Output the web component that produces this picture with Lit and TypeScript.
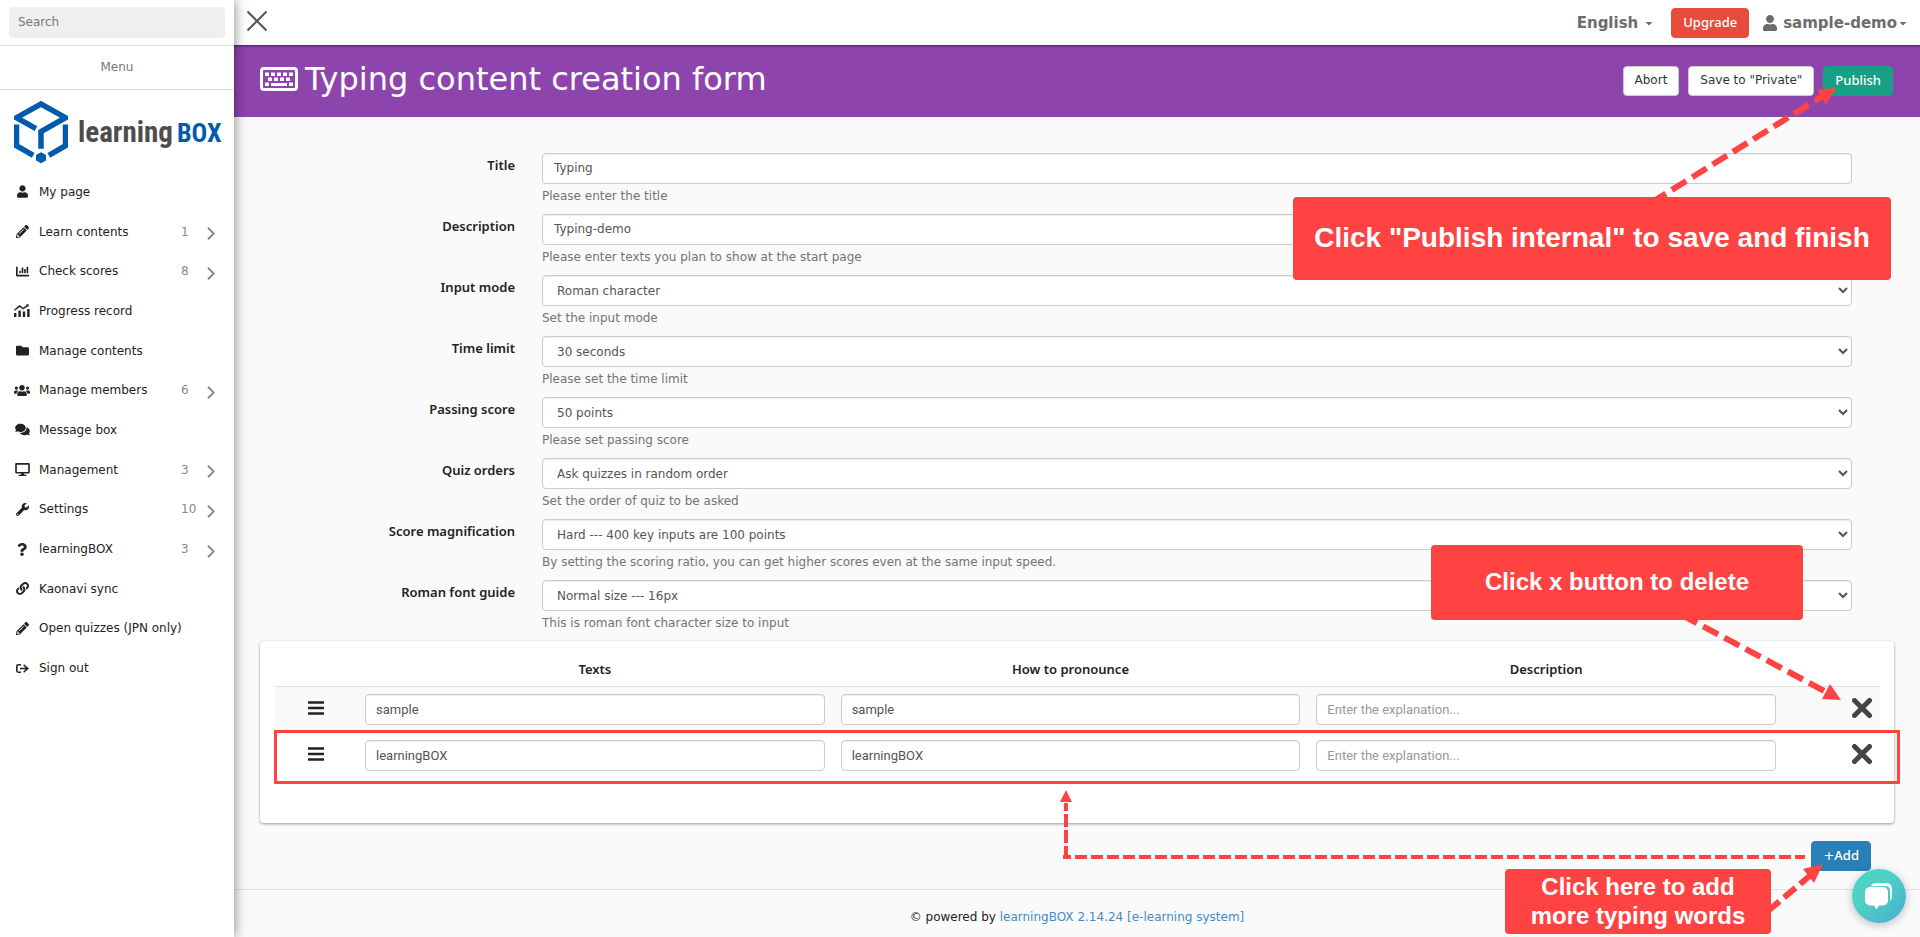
import { LitElement, html, css, svg, nothing } from "lit";
import { customElement, state } from "lit/decorators.js";

interface Icon {
  box: string;
  width: number;
  d: string;
}

const icons: Record<string, Icon> = {
  user: { box: "0 0 448 512", width: 11, d: "M224 256c70.7 0 128-57.3 128-128S294.7 0 224 0 96 57.3 96 128s57.3 128 128 128zm89.6 32h-16.7c-22.2 10.2-46.9 16-72.9 16s-50.6-5.8-72.9-16h-16.7C60.2 288 0 348.2 0 422.4V464c0 26.5 21.5 48 48 48h352c26.5 0 48-21.5 48-48v-41.6c0-74.2-60.2-134.4-134.4-134.4z" },
  pencil: { box: "0 0 512 512", width: 13, d: "M497.9 142.1l-46.1 46.1c-4.7 4.7-12.3 4.7-17 0l-111-111c-4.7-4.7-4.7-12.3 0-17l46.1-46.1c18.7-18.7 49.1-18.7 67.9 0l60.1 60.1c18.8 18.7 18.8 49.1 0 67.9zM284.2 99.8L21.6 362.4.4 483.9c-2.9 16.4 11.4 30.6 27.8 27.8l121.5-21.3 262.6-262.6c4.7-4.7 4.7-12.3 0-17l-111-111c-4.8-4.7-12.4-4.7-17.1 0zM124.1 339.9c-5.5-5.5-5.5-14.3 0-19.8l154-154c5.5-5.5 14.3-5.5 19.8 0s5.5 14.3 0 19.8l-154 154c-5.5 5.5-14.3 5.5-19.8 0zM88 424h48v36.3l-64.5 11.3-31.1-31.1L51.7 376H88v48z" },
  chart: { box: "0 0 512 512", width: 13, d: "M332.8 320h38.4c6.4 0 12.8-6.4 12.8-12.8V172.8c0-6.4-6.4-12.8-12.8-12.8h-38.4c-6.4 0-12.8 6.4-12.8 12.8v134.4c0 6.4 6.4 12.8 12.8 12.8zm96 0h38.4c6.4 0 12.8-6.4 12.8-12.8V76.8c0-6.4-6.4-12.8-12.8-12.8h-38.4c-6.4 0-12.8 6.4-12.8 12.8v230.4c0 6.4 6.4 12.8 12.8 12.8zm-288 0h38.4c6.4 0 12.8-6.4 12.8-12.8v-70.4c0-6.4-6.4-12.8-12.8-12.8h-38.4c-6.4 0-12.8 6.4-12.8 12.8v70.4c0 6.4 6.4 12.8 12.8 12.8zm96 0h38.4c6.4 0 12.8-6.4 12.8-12.8V108.8c0-6.4-6.4-12.8-12.8-12.8h-38.4c-6.4 0-12.8 6.4-12.8 12.8v198.4c0 6.4 6.4 12.8 12.8 12.8zM496 384H64V80c0-8.84-7.16-16-16-16H16C7.16 64 0 71.16 0 80v336c0 17.67 14.33 32 32 32h464c8.84 0 16-7.16 16-16v-32c0-8.84-7.16-16-16-16z" },
  progress: { box: "0 0 16 13", width: 16, d: "M0 9h2.4v4H0zM4.4 6.4h2.4V13H4.4zM8.8 7.6h2.4V13H8.8zM13.2 5h2.4v8h-2.4zM.9 6.8l4.7-3.9 3.6 2.7 4.3-3.2.5.8.9-3-3 .4.7.7-3.4 2.5L5.5 1.1 0 5.7z" },
  folder: { box: "0 0 512 512", width: 13, d: "M464 128H272l-64-64H48C21.49 64 0 85.49 0 112v288c0 26.51 21.49 48 48 48h416c26.51 0 48-21.49 48-48V176c0-26.51-21.49-48-48-48z" },
  users: { box: "0 0 640 512", width: 16, d: "M96 224c35.3 0 64-28.7 64-64s-28.7-64-64-64-64 28.7-64 64 28.7 64 64 64zm448 0c35.3 0 64-28.7 64-64s-28.7-64-64-64-64 28.7-64 64 28.7 64 64 64zm32 32h-64c-17.6 0-33.5 7.1-45.1 18.6 40.3 22.1 68.9 62 75.1 109.4h66c17.7 0 32-14.3 32-32v-32c0-35.3-28.7-64-64-64zm-256 0c61.9 0 112-50.1 112-112S381.9 32 320 32 208 82.1 208 144s50.1 112 112 112zm76.8 32h-8.3c-20.8 10-43.9 16-68.5 16s-47.6-6-68.5-16h-8.3C179.6 288 128 339.6 128 403.2V432c0 26.5 21.5 48 48 48h288c26.5 0 48-21.5 48-48v-28.8c0-63.6-51.6-115.2-115.2-115.2zm-223.7-13.4C161.5 263.1 145.6 256 128 256H64c-35.3 0-64 28.7-64 64v32c0 17.7 14.3 32 32 32h65.9c6.3-47.4 34.9-87.3 75.2-109.4z" },
  comments: { box: "0 0 576 512", width: 15, d: "M416 192c0-88.4-93.1-160-208-160S0 103.6 0 192c0 34.3 14.1 65.9 38 92-13.4 30.2-35.5 54.2-35.8 54.5-2.2 2.3-2.8 5.7-1.5 8.7S4.8 352 8 352c36.6 0 66.9-12.3 88.7-25 32.2 15.7 70.3 25 111.3 25 114.9 0 208-71.6 208-160zm122 220c23.9-26 38-57.7 38-92 0-66.9-53.5-124.2-129.3-148.1.9 6.6 1.3 13.3 1.3 20.1 0 105.9-107.7 192-240 192-10.8 0-21.3-.8-31.7-1.9C207.8 439.6 281.8 480 368 480c41 0 79.1-9.2 111.3-25 21.8 12.7 52.1 25 88.7 25 3.2 0 6.1-1.9 7.3-4.8 1.3-2.9.7-6.3-1.5-8.7-.3-.3-22.4-24.2-35.8-54.5z" },
  desktop: { box: "0 0 576 512", width: 15, d: "M528 0H48C21.5 0 0 21.5 0 48v320c0 26.5 21.5 48 48 48h192l-16 48h-72c-13.3 0-24 10.7-24 24s10.7 24 24 24h272c13.3 0 24-10.7 24-24s-10.7-24-24-24h-72l-16-48h192c26.5 0 48-21.5 48-48V48c0-26.5-21.5-48-48-48zm-16 352H64V64h448v288z" },
  wrench: { box: "0 0 512 512", width: 13, d: "M507.73 109.1c-2.24-9.03-13.54-12.09-20.12-5.51l-74.36 74.36-67.88-11.31-11.31-67.88 74.36-74.36c6.62-6.62 3.43-17.9-5.66-20.16-47.38-11.74-99.55.91-136.58 37.93-39.64 39.64-50.55 97.1-34.05 147.2L18.74 402.76c-24.99 24.99-24.99 65.51 0 90.5 24.99 24.99 65.51 24.99 90.5 0l213.21-213.21c50.12 16.71 107.47 5.68 147.37-34.22 37.07-37.07 49.7-89.32 37.91-136.73zM64 472c-13.25 0-24-10.75-24-24 0-13.26 10.75-24 24-24s24 10.74 24 24c0 13.25-10.75 24-24 24z" },
  question: { box: "0 0 384 512", width: 10, d: "M202.021 0C122.202 0 70.503 32.703 29.914 91.026c-7.363 10.58-5.093 25.086 5.178 32.874l43.138 32.709c10.373 7.865 25.132 6.026 33.253-4.148 25.049-31.381 43.63-49.449 82.757-49.449 30.764 0 68.816 19.799 68.816 49.631 0 22.552-18.617 34.134-48.993 51.164-35.423 19.86-82.299 44.576-82.299 106.405V320c0 13.255 10.745 24 24 24h72.471c13.255 0 24-10.745 24-24v-5.773c0-42.86 125.268-44.645 125.268-160.627C377.504 66.256 286.902 0 202.021 0zM192 373.459c-38.196 0-69.271 31.075-69.271 69.271 0 38.195 31.075 69.27 69.271 69.27s69.271-31.075 69.271-69.271-31.075-69.27-69.271-69.27z" },
  link: { box: "0 0 512 512", width: 13, d: "M326.612 185.391c59.747 59.809 58.927 155.698.36 214.59-.11.12-.24.25-.36.37l-67.2 67.2c-59.27 59.27-155.699 59.262-214.96 0-59.27-59.26-59.27-155.7 0-214.96l37.106-37.106c9.84-9.84 26.786-3.3 27.294 10.606.648 17.722 3.826 35.527 9.69 52.721 1.986 5.822.567 12.262-3.783 16.612l-13.087 13.087c-28.026 28.026-28.905 73.66-1.155 101.96 28.024 28.579 74.086 28.749 102.325.51l67.2-67.19c28.191-28.191 28.073-73.757 0-101.83-3.701-3.694-7.429-6.564-10.341-8.569a16.037 16.037 0 0 1-6.947-12.606c-.396-10.567 3.348-21.456 11.698-29.806l21.054-21.055c5.521-5.521 14.182-6.199 20.584-1.731a152.482 152.482 0 0 1 20.522 17.197zM467.547 44.449c-59.261-59.262-155.69-59.27-214.96 0l-67.2 67.2c-.12.12-.25.25-.36.37-58.566 58.892-59.387 154.781.36 214.59a152.454 152.454 0 0 0 20.521 17.196c6.402 4.468 15.064 3.789 20.584-1.731l21.054-21.055c8.35-8.35 12.094-19.239 11.698-29.806a16.037 16.037 0 0 0-6.947-12.606c-2.912-2.005-6.64-4.875-10.341-8.569-28.073-28.073-28.191-73.639 0-101.83l67.2-67.19c28.239-28.239 74.3-28.069 102.325.51 27.75 28.3 26.872 73.934-1.155 101.96l-13.087 13.087c-4.35 4.35-5.769 10.79-3.783 16.612 5.864 17.194 9.042 34.999 9.69 52.721.509 13.906 17.454 20.446 27.294 10.606l37.106-37.106c59.271-59.259 59.271-155.699.001-214.959z" },
  signout: { box: "0 0 13 13", width: 13, d: "M5 2H2.4A2.4 2.4 0 0 0 0 4.4v4.2A2.4 2.4 0 0 0 2.4 11H5V9.4H2.6a1 1 0 0 1-1-1V4.6a1 1 0 0 1 1-1H5zM8.1 2.2 7.2 3.3 9.5 5.7H4v1.6h5.5L7.2 9.7l.9 1.1L13 6.5z" },
};

const icon = (name: string) => {
  const i = icons[name];
  return html`<svg viewBox=${i.box} width=${i.width} height="13" aria-hidden="true"><path d=${i.d} fill="currentColor"></path></svg>`;
};

const menu = [
  { icon: "user", label: "My page", count: "" },
  { icon: "pencil", label: "Learn contents", count: "1" },
  { icon: "chart", label: "Check scores", count: "8" },
  { icon: "progress", label: "Progress record", count: "" },
  { icon: "folder", label: "Manage contents", count: "" },
  { icon: "users", label: "Manage members", count: "6" },
  { icon: "comments", label: "Message box", count: "" },
  { icon: "desktop", label: "Management", count: "3" },
  { icon: "wrench", label: "Settings", count: "10" },
  { icon: "question", label: "learningBOX", count: "3" },
  { icon: "link", label: "Kaonavi sync", count: "" },
  { icon: "pencil", label: "Open quizzes (JPN only)", count: "" },
  { icon: "signout", label: "Sign out", count: "" },
];

const fields = [
  { id: "title", label: "Title", value: "Typing", help: "Please enter the title", select: false },
  { id: "description", label: "Description", value: "Typing-demo", help: "Please enter texts you plan to show at the start page", select: false },
  { id: "mode", label: "Input mode", value: "Roman character", help: "Set the input mode", select: true },
  { id: "limit", label: "Time limit", value: "30 seconds", help: "Please set the time limit", select: true },
  { id: "passing", label: "Passing score", value: "50 points", help: "Please set passing score", select: true },
  { id: "order", label: "Quiz orders", value: "Ask quizzes in random order", help: "Set the order of quiz to be asked", select: true },
  { id: "scale", label: "Score magnification", value: "Hard --- 400 key inputs are 100 points", help: "By setting the scoring ratio, you can get higher scores even at the same input speed.", select: true },
  { id: "guide", label: "Roman font guide", value: "Normal size --- 16px", help: "This is roman font character size to input", select: true },
];

@customElement("app-sidebar")
class AppSidebar extends LitElement {
  static styles = css`
    :host {
      display: block;
      background: #fff;
      color: #222;
      box-shadow: 0 0 12px rgba(0, 0, 0, 0.5);
    }
    .search {
      padding: 7px 9px;
      border-bottom: 1px solid #ddd;
    }
    .search input {
      display: block;
      box-sizing: border-box;
      width: 100%;
      height: 31px;
      padding: 0 9px 2px;
      border: 0;
      border-radius: 4px;
      background: #efefef;
      font: inherit;
    }
    .search input::placeholder {
      color: #777;
    }
    .heading {
      margin: 0;
      padding: 12px 0 13px;
      border-bottom: 1px solid #ddd;
      color: #777;
      font-size: 12px;
      font-weight: 400;
      line-height: 18px;
      text-align: center;
    }
    .logo {
      display: flex;
      align-items: center;
      gap: 10px;
      margin: 11px 13px 8px 14px;
      color: #4d4d4d;
      font: 700 29px/30px "Roboto Condensed", "Liberation Sans Narrow", "Open Sans Condensed", "Liberation Sans", sans-serif;
      text-decoration: none;
    }
    .mark {
      flex: none;
      overflow: hidden;
    }
    .word {
      display: flex;
      align-items: baseline;
      gap: 4px;
      white-space: nowrap;
    }
    .box {
      color: #005bac;
      font-size: 26px;
    }
    ul {
      display: grid;
      grid-auto-rows: 1fr;
      min-height: 516px;
      margin: 0;
      padding: 0;
      list-style: none;
    }
    .item {
      display: grid;
      grid-template-columns: 16px 126px 19px 8px;
      column-gap: 9px;
      align-items: center;
      height: 100%;
      padding-left: 14px;
      color: inherit;
      text-decoration: none;
      white-space: nowrap;
    }
    .item > svg {
      justify-self: center;
    }
    .count {
      margin-left: 7px;
      color: #888;
    }
    .item .more {
      margin: 4px 0 0 9px;
    }
  `;

  render() {
    return html`
      <div class="search"><input type="search" placeholder="Search" aria-label="Search" /></div>
      <h2 class="heading">Menu</h2>
      <a class="logo" href="#">
        <svg class="mark" width="54" height="63" viewBox="14 101 54 63" aria-hidden="true">
          <g fill="none" stroke="#005bac" stroke-width="5.500" stroke-miterlimit="10">
            <path d="M36 128.6 16.5 117.7 41 104l24.5 13.7L41 131.5v17.3"></path>
            <path d="M16.5 124.5v21.2l16.7 9.6M65.5 124.5v21.2l-16.7 9.6"></path>
          </g>
          <path fill="#005bac" d="M41 152.3l5 2.8v5.3l-5 2.8-5-2.800v-5.300z"></path>
        </svg>
        <span class="word"><span>learning</span><span class="box">BOX</span></span>
      </a>
      <nav>
        <ul>
          ${menu.map(
            (m) => html`<li>
              <a class="item" href="#">
                ${icon(m.icon)}
                <span>${m.label}</span>
                <span class="count">${m.count}</span>
                ${m.count
                  ? html`<svg class="more" width="8" height="13" viewBox="0 0 8 13" aria-hidden="true"><path d="M1 .8l5.7 5.7L1 12.2" fill="none" stroke="#888" stroke-width="2"></path></svg>`
                  : nothing}
              </a>
            </li>`
          )}
        </ul>
      </nav>
    `;
  }
}

@customElement("app-annotations")
class AppAnnotations extends LitElement {
  static styles = css`
    :host {
      position: absolute;
      inset: 0;
      overflow: hidden;
      pointer-events: none;
      color: #fff;
      font: 700 24px/29px "Liberation Sans", Arial, sans-serif;
      text-align: center;
    }
    .arrows {
      position: absolute;
      top: 0;
      right: 0;
    }
    .note {
      position: absolute;
      display: flex;
      align-items: center;
      justify-content: center;
      box-sizing: border-box;
      padding-bottom: 2px;
      border-radius: 4px;
      background: #ff4343;
    }
    .publish {
      top: 197px;
      right: 29px;
      width: 598px;
      height: 83px;
      font-size: 28px;
    }
    .delete {
      top: 545px;
      right: 117px;
      width: 372px;
      height: 75px;
    }
    .add {
      top: 869px;
      right: 149px;
      width: 266px;
      height: 65px;
    }
    .frame {
      position: absolute;
      top: 730px;
      right: 20px;
      left: 274px;
      box-sizing: border-box;
      height: 54px;
      border: 3px solid #ff4343;
    }
  `;

  render() {
    return html`
      <div class="frame"></div>
      <svg class="arrows" width="900" height="937" viewBox="1020 0 900 937" aria-hidden="true">
        <g fill="none" stroke="#ff4343" stroke-width="6">
          <path d="M1654 201 1826 94" stroke-dasharray="17 7" stroke-dashoffset="3"></path>
          <path d="M1682 615 1830 694" stroke-dasharray="17 7" stroke-dashoffset="0"></path>
          <path d="M1768 911 1812 874" stroke-dasharray="15 6"></path>
        </g>
        <g fill="none" stroke="#ff4343" stroke-width="4">
          <path d="M1063 857h8M1075 857h730" stroke-dasharray="12 4"></path>
          <path d="M1066 859v-56" stroke-dasharray="13 3"></path>
        </g>
        <g fill="#ff4343">
          <path d="M1836 88 1817 89.500 1821.500 97 1826 104.500z"></path>
          <path d="M1841 700 1830 684 1822 699z"></path>
          <path d="M1823 864 1803 869 1814 883z"></path>
          <path d="M1066 790l6 12h-12z"></path>
        </g>
      </svg>
      <div class="note publish">Click "Publish internal" to save and finish</div>
      <div class="note delete">Click x button to delete</div>
      <div class="note add">Click here to add<br />more typing words</div>
    `;
  }
}

@customElement("app-root")
class AppRoot extends LitElement {
  static styles = css`
    :host {
      position: relative;
      display: grid;
      grid-template-columns: 234px minmax(0, 1fr);
      min-height: 100vh;
      background: #fafafa;
      color: #222;
      font: 12px/18px "DejaVu Sans", Verdana, sans-serif;
    }
    app-sidebar {
      z-index: 1;
    }
    button,
    input,
    select {
      box-sizing: border-box;
      font: inherit;
    }
    button {
      padding: 0;
      border: 0;
      background: none;
      color: inherit;
      cursor: pointer;
    }
    button svg {
      display: block;
    }
    .strong,
    label,
    th {
      font-family: "Noto Sans", sans-serif;
      font-size: 13px;
      font-weight: 600;
    }
    .strong {
      font-weight: 500;
    }
    .top {
      display: flex;
      align-items: center;
      height: 45px;
      padding: 0 13px 0 12px;
      background: #fff;
      color: #6c6c6c;
    }
    .close {
      margin: 0 auto 3px 0;
    }
    .top .drop {
      display: flex;
      align-items: center;
      font-size: 15px;
      font-weight: 700;
      line-height: 24px;
    }
    .top .lang {
      gap: 7px;
      margin-right: 18px;
    }
    .drop .caret {
      margin-top: 2px;
    }
    .person {
      margin-right: 4px;
    }
    .account {
      gap: 2px;
      margin-left: 14px;
    }
    .btn {
      height: 30px;
      padding: 0 11px 2px;
      border: 1px solid #ccc;
      border-radius: 4px;
      background: #fff;
      color: #333;
      white-space: nowrap;
    }
    .upgrade {
      border-color: #e74c3c;
      background: #e74c3c;
      color: #fff;
    }
    .go {
      border-color: #16a085;
      background: #16a085;
      color: #fff;
    }
    .banner {
      display: flex;
      align-items: center;
      gap: 9px;
      height: 72px;
      padding: 0 27px 0 26px;
      box-sizing: border-box;
      background: #8e44ad;
      box-shadow: inset 0 3px 3px -2px rgba(0, 0, 0, 0.5);
      color: #fff;
    }
    h1 {
      display: flex;
      align-items: center;
      gap: 7px;
      margin: 0 auto 4px 0;
      font-size: 32px;
      font-weight: 400;
      line-height: 40px;
      white-space: nowrap;
    }
    .body {
      padding: 36px 26px 18px;
    }
    .group {
      display: grid;
      grid-template-columns: 255px minmax(0, 1fr);
      column-gap: 27px;
      padding: 0 42px 9px 0;
    }
    label {
      padding-top: 3px;
      text-align: right;
    }
    .control {
      display: block;
      width: 100%;
      height: 31px;
      padding: 0 11px 2px;
      border: 1px solid #ccc;
      border-radius: 4px;
      background: #fff;
      box-shadow: inset 0 1px 1px rgba(0, 0, 0, 0.075);
      color: #555;
    }
    select.control {
      padding: 0 5px 0 10px;
    }
    .help {
      margin: 3px 0 0;
      color: #737373;
    }
    .card {
      padding: 15px 14px 44px 15px;
      border-radius: 4px;
      background: #fff;
      box-shadow: 0 1px 3px rgba(0, 0, 0, 0.4);
    }
    table {
      width: 100%;
      border-collapse: collapse;
      table-layout: fixed;
    }
    th {
      padding: 4px 8px 8px;
      border-bottom: 1px solid #ddd;
      line-height: 18px;
    }
    .grip {
      width: 66px;
    }
    .remove {
      width: 80px;
    }
    td {
      padding: 7px 8px 8px;
    }
    tbody tr:nth-child(odd) {
      background: #f9f9f9;
    }
    td button {
      display: block;
      margin: 0 auto 3px;
    }
    td:last-child button {
      margin-right: 0;
    }
    td .control {
      padding: 0 10px;
      font-family: Roboto, sans-serif;
      font-size: 13px;
    }
    td .control::placeholder {
      color: #999;
    }
    .actions {
      display: flex;
      justify-content: flex-end;
      padding: 18px 23px 0 0;
    }
    .plus {
      border-color: #2980b9;
      background: #2980b9;
      color: #fff;
    }
    .sign {
      font-family: "DejaVu Sans", sans-serif;
      font-weight: 400;
    }
    footer {
      padding: 18px 0 11px;
      border-top: 1px solid #e2e2e2;
      text-align: center;
    }
    footer a {
      color: #428bca;
      text-decoration: none;
    }
    .chat {
      position: fixed;
      right: 14px;
      bottom: 14px;
      z-index: 2;
      display: grid;
      place-items: center;
      width: 54px;
      height: 54px;
      border-radius: 50%;
      background: linear-gradient(135deg, #4fd1c5 40%, #45aed2);
      box-shadow: 0 2px 10px rgba(0, 0, 0, 0.25);
    }
  `;

  @state() private rows = [
    { id: 1, text: "sample" },
    { id: 2, text: "learningBOX" },
  ];

  private add() {
    this.rows = [...this.rows, { id: Date.now(), text: "" }];
  }

  private remove(id: number) {
    this.rows = this.rows.filter((r) => r.id !== id);
  }

  private caret() {
    return html`<svg class="caret" width="8" height="4" viewBox="0 0 8 4" aria-hidden="true"><path d="M.5 0h7L4 3.6z" fill="currentColor"></path></svg>`;
  }

  private keyboard() {
    const keys = [
      ...[0, 1, 2, 3, 4].map((i) => [5 + i * 6, 5.5]),
      ...[0, 1, 2, 3].map((i) => [8 + i * 6, 10.5]),
      [5, 15.5],
      [29, 15.5],
    ];
    return html`<svg width="38" height="24" viewBox="0 0 38 24" aria-hidden="true">
      <rect x="1.5" y="1.5" width="35" height="21" rx="2.5" fill="none" stroke="#fff" stroke-width="3"></rect>
      ${keys.map(([x, y]) => svg`<rect x=${x} y=${y} width="4" height="3.5" fill="#fff"></rect>`)}
      <rect x="11" y="16" width="16" height="3" fill="#fff"></rect>
    </svg>`;
  }

  render() {
    return html`
      <app-sidebar></app-sidebar>
      <div>
        <header class="top">
          <button class="close" aria-label="Close menu">
            <svg width="22" height="22" viewBox="0 0 22 22"><path d="M1.5 1.5l19 19M20.5 1.5l-19 19" stroke="#555" stroke-width="2"></path></svg>
          </button>
          <button class="drop lang">English ${this.caret()}</button>
          <button class="btn upgrade strong">Upgrade</button>
          <button class="drop account">
            <svg class="person" width="14" height="16" viewBox="0 0 448 512" aria-hidden="true"><path d=${icons.user.d} fill="currentColor"></path></svg>sample-demo${this.caret()}
          </button>
        </header>
        <div class="banner">
          <h1>${this.keyboard()}Typing content creation form</h1>
          <button class="btn">Abort</button>
          <button class="btn">Save to "Private"</button>
          <button class="btn go strong">Publish</button>
        </div>
        <main class="body">
          ${fields.map(
            (f) => html`<div class="group">
              <label for=${f.id}>${f.label}</label>
              <div>
                ${f.select
                  ? html`<select class="control" id=${f.id}><option>${f.value}</option></select>`
                  : html`<input class="control" id=${f.id} type="text" .value=${f.value} />`}
                <p class="help">${f.help}</p>
              </div>
            </div>`
          )}
          <div class="card">
            <table>
              <thead>
                <tr>
                  <th class="grip"></th>
                  <th>Texts</th>
                  <th>How to pronounce</th>
                  <th>Description</th>
                  <th class="remove"></th>
                </tr>
              </thead>
              <tbody>
                ${this.rows.map(
                  (r) => html`<tr>
                    <td>
                      <button aria-label="Reorder"><svg width="16" height="14" viewBox="0 0 16 14"><path d="M0 1.5h16M0 7h16M0 12.5h16" stroke="#222" stroke-width="2.5"></path></svg></button>
                    </td>
                    <td><input class="control" type="text" aria-label="Texts" .value=${r.text} /></td>
                    <td><input class="control" type="text" aria-label="How to pronounce" .value=${r.text} /></td>
                    <td><input class="control" type="text" aria-label="Description" placeholder="Enter the explanation..." /></td>
                    <td>
                      <button aria-label="Delete" @click=${() => this.remove(r.id)}>
                        <svg width="20" height="20" viewBox="0 0 20 20"><path d="M2.5 2.5l15 15M17.5 2.5l-15 15" stroke="#444" stroke-width="5" stroke-linecap="round"></path></svg>
                      </button>
                    </td>
                  </tr>`
                )}
              </tbody>
            </table>
          </div>
          <div class="actions">
            <button class="btn plus strong" @click=${this.add}><span class="sign">+</span>Add</button>
          </div>
        </main>
        <footer>© powered by <a href="#">learningBOX 2.14.24 [e-learning system]</a></footer>
      </div>
      <app-annotations></app-annotations>
      <button class="chat" aria-label="Chat">
        <svg width="28" height="28" viewBox="0 0 28 28">
          <path d="M6 4.3Q7 1 11 1h10q6 0 6 6v7q0 3.5-2 5V9q0-5-5-5z" fill="#fff"></path>
          <rect x="0" y="5" width="23" height="18.5" rx="5" fill="#fff"></rect>
          <path d="M8.5 23h6l-3 4.5z" fill="#fff"></path>
        </svg>
      </button>
    `;
  }
}
